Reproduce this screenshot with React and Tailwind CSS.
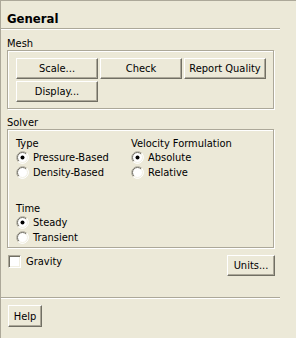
const font = "font-['DejaVu_Sans_Condensed','Liberation_Sans',sans-serif]";

function Button({ children, className = "" }) {
  return (
    <div
      className={`flex items-center justify-center bg-[#ece9d8] border border-t-white border-l-white border-r-[#716f64] border-b-[#716f64] shadow-[inset_-1px_-1px_0_#aca899] text-[11px] leading-[13px] text-black ${className}`}
    >
      {children}
    </div>
  );
}

function Radio({ checked, label }) {
  return (
    <div className="flex items-center h-[15px] gap-[4px]">
      <svg width="13" height="13" viewBox="0 0 13 13">
        <circle cx="6.5" cy="6.5" r="6" fill="white" />
        <path d="M2.26 10.74 A6 6 0 0 1 10.74 2.26" stroke="#aca899" fill="none" />
        <path d="M10.74 2.26 A6 6 0 0 1 2.26 10.74" stroke="white" fill="none" />
        <path d="M2.96 10.04 A5 5 0 0 1 10.04 2.96" stroke="#716f64" fill="none" />
        <path d="M10.04 2.96 A5 5 0 0 1 2.96 10.04" stroke="#f1efe2" fill="none" />
        {checked && <circle cx="6.5" cy="6.5" r="2" fill="black" />}
      </svg>
      <span>{label}</span>
    </div>
  );
}

function Separator() {
  return <div className="w-[279px] h-[2px] border-t border-t-[#aca899] border-b border-b-white" />;
}

const groupBox =
  "ml-[6px] w-[267px] border border-[#aca899] shadow-[inset_1px_1px_0_white,1px_1px_0_white]";

export default function App() {
  return (
    <div className={`w-[296px] h-[338px] bg-[#ece9d8] border-t border-l border-[#aca899] text-[11px] leading-[13px] text-black ${font}`}>
      <div className="h-[27px] pt-[10px] pl-[6px] text-[13px] leading-[16px] font-bold">General</div>
      <Separator />

      <div className="mt-[7px] pl-[6px]">Mesh</div>
      <div className={`${groupBox} h-[59px] pt-[7px] pl-[8px]`}>
        <div className="grid grid-cols-[82px_82px_82px] gap-x-[2px] gap-y-[2px]">
          <Button className="h-[21px]">Scale...</Button>
          <Button className="h-[21px]">Check</Button>
          <Button className="h-[21px]">Report Quality</Button>
          <Button className="h-[21px]">Display...</Button>
        </div>
      </div>

      <div className="mt-[7px] pl-[6px]">Solver</div>
      <div className={`${groupBox} h-[119px] pt-[7px] pl-[8px] flex`}>
        <div className="w-[115px]">
          <div>Type</div>
          <Radio checked label="Pressure-Based" />
          <Radio label="Density-Based" />
          <div className="mt-[22px]">Time</div>
          <Radio checked label="Steady" />
          <Radio label="Transient" />
        </div>
        <div>
          <div>Velocity Formulation</div>
          <Radio checked label="Absolute" />
          <Radio label="Relative" />
        </div>
      </div>

      <div className="mt-[7px] ml-[7px] w-[267px] flex justify-between items-start">
        <div className="flex items-center gap-[5px] h-[13px]">
          <div className="w-[13px] h-[13px] bg-white border border-t-[#aca899] border-l-[#aca899] border-r-white border-b-white shadow-[inset_1px_1px_0_#716f64,inset_-1px_-1px_0_#f1efe2]" />
          <span>Gravity</span>
        </div>
        <Button className="w-[48px] h-[21px]">Units...</Button>
      </div>

      <div className="mt-[21px]">
        <Separator />
      </div>

      <div className="mt-[6px] ml-[7px]">
        <Button className="w-[34px] h-[22px]">Help</Button>
      </div>
    </div>
  );
}
